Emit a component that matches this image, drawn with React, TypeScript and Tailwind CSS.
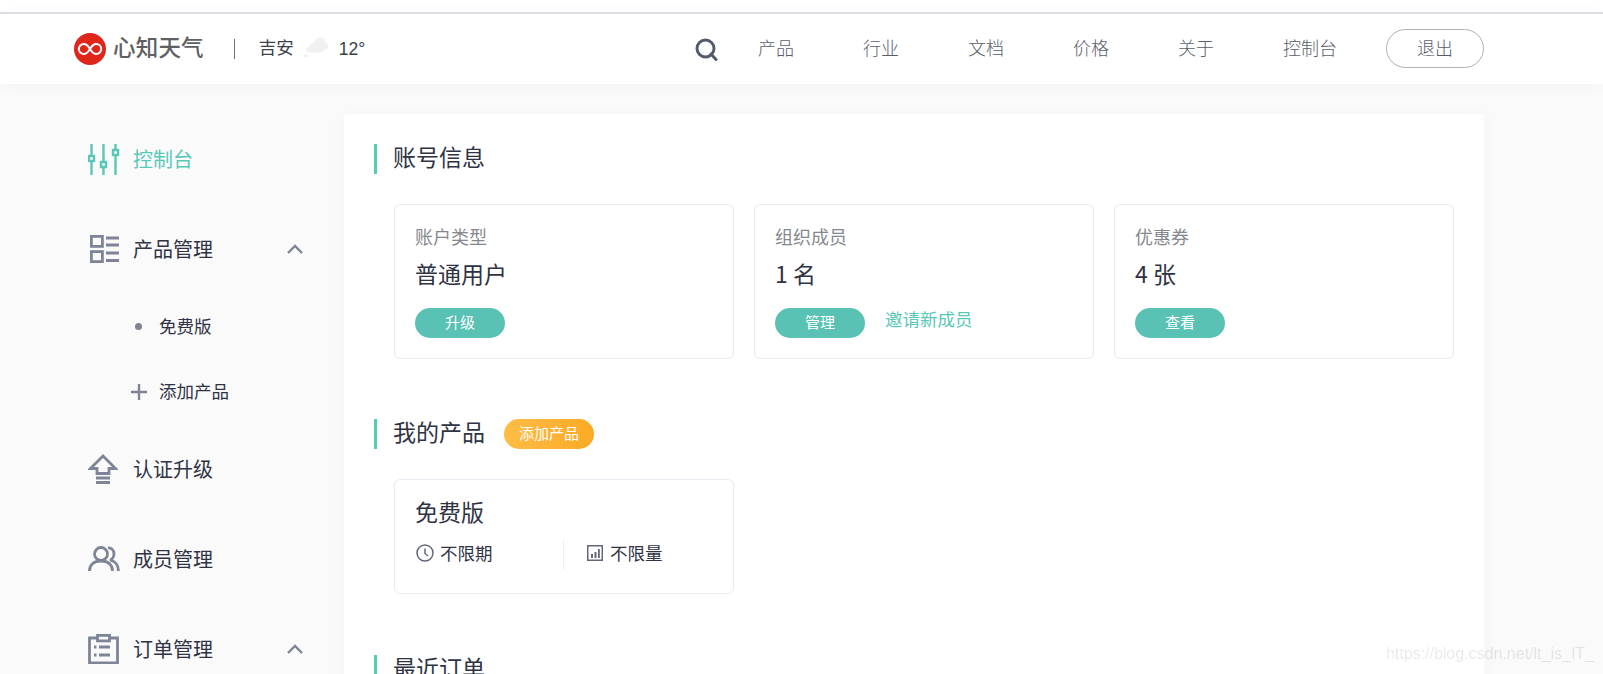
import React from "react";

const font = { fontFamily: '"Noto Sans CJK SC", "Liberation Sans", sans-serif' };

function Logo() {
  return (
    <svg width="32" height="32" viewBox="0 0 32 32" className="shrink-0">
      <circle cx="16" cy="16" r="16" fill="#e0251b" />
      <path d="M16 16c-1.800-3-3.600-5-6.200-5A5 5 0 0 0 4.800 16a5 5 0 0 0 5 5c2.600 0 4.400-2 6.200-5s3.600-5 6.200-5a5 5 0 0 1 5 5 5 5 0 0 1-5 5c-2.600 0-4.400-2-6.200-5z" fill="none" stroke="#fff" strokeWidth="2" />
    </svg>
  );
}

function Cloud() {
  return (
    <svg width="25" height="20" viewBox="0 0 25 20" className="shrink-0">
      <path d="M3 14c0-2.500 1.500-4 3.500-4.300C7.500 6.500 9.500 5 11.500 5 12.500 2 15 .5 17.500 .5c3 0 4.500 2.500 4.500 5 2 .5 3 2 3 4 0 2.500-2 3.500-4 3.500-1 2-3 2.500-5 2.500H7c-2.500 0-4-.5-4-1.500z" fill="#f1f1f1" />
      <path d="M0 20c0-2 1.500-3 3-3s3 1 3 3z" fill="#f2f2f2" />
    </svg>
  );
}

function Search() {
  return (
    <svg width="23" height="23" viewBox="0 0 23 23" fill="none" stroke="#555b6e" strokeWidth="3" className="shrink-0">
      <circle cx="10.500" cy="10.500" r="8.500" />
      <path d="M16 16l5 5.500" strokeLinecap="round" />
    </svg>
  );
}

function Sliders() {
  return (
    <svg width="32" height="31" viewBox="0 0 32 31" fill="none" stroke="#5ac8b8" strokeWidth="2.400" className="shrink-0">
      <path d="M3.500 0v12M3.500 17v14M15.500 0v18M15.500 23v8M27.500 0v6M27.500 11v20" />
      <rect x="1" y="12" width="5" height="5" />
      <rect x="13" y="18" width="5" height="5" />
      <rect x="25" y="6" width="5" height="5" />
    </svg>
  );
}

function ListIcon() {
  return (
    <svg width="29" height="28" viewBox="0 0 29 28" fill="none" stroke="#7f8496" strokeWidth="2.800" className="ml-[2px] shrink-0">
      <rect x="1.400" y="1.400" width="11" height="10" />
      <rect x="1.400" y="16.600" width="11" height="10" />
      <path d="M16 3h13M16 10h13M16 18h13M16 25.500h13" />
    </svg>
  );
}

function UpgradeIcon() {
  return (
    <svg width="30" height="30" viewBox="0 0 30 30" fill="none" stroke="#7f8496" strokeWidth="2.800" className="shrink-0">
      <path d="M15 2L2.500 14.500h6.500v5h12v-5h6.500z" strokeLinejoin="miter" />
      <path d="M8 24h14M8 28.500h14" />
    </svg>
  );
}

function UsersIcon() {
  return (
    <svg width="32" height="26" viewBox="0 0 32 26" fill="none" stroke="#7f8496" strokeWidth="2.800" className="shrink-0">
      <circle cx="13" cy="8" r="6.500" />
      <path d="M1.500 25c0-6 4-10 11.500-10s11.500 4 11.500 10" />
      <path d="M20 2c3-.5 6 2 6 6 0 3-2 5.500-4 6 5 1 8.500 5 8.500 11" />
    </svg>
  );
}

function OrderIcon() {
  return (
    <svg width="31" height="30" viewBox="0 0 31 30" fill="none" stroke="#7f8496" strokeWidth="2.800" className="shrink-0">
      <path d="M9 4H1.500v24.800h28V4H22" />
      <rect x="9.500" y="1.400" width="12" height="5.500" />
      <path d="M11 13h11M11 21h11" />
      <path d="M6 13h2.500M6 21h2.500" />
    </svg>
  );
}

function Chevron() {
  return (
    <svg width="16" height="10" viewBox="0 0 16 10" fill="none" stroke="#7f8496" strokeWidth="2.400" className="shrink-0">
      <path d="M1 9l7-7 7 7" />
    </svg>
  );
}

function ClockIcon() {
  return (
    <svg width="18" height="18" viewBox="0 0 18 18" fill="none" stroke="#62677a" strokeWidth="1.500" className="shrink-0">
      <circle cx="9" cy="9" r="8" />
      <path d="M9 4.500V9.500l3 2.500" />
    </svg>
  );
}

function BarsIcon() {
  return (
    <svg width="16" height="16" viewBox="0 0 16 16" className="shrink-0">
      <rect x=".75" y=".75" width="14.500" height="14.500" fill="none" stroke="#62677a" strokeWidth="1.500" />
      <path d="M4 9h2v4H4zM7.500 7h2v6h-2zM11 4h1.800v9H11z" fill="#62677a" />
    </svg>
  );
}

function PlusIcon() {
  return (
    <svg width="16" height="16" viewBox="0 0 16 16" stroke="#7f8496" strokeWidth="2.400" className="shrink-0">
      <path d="M0 8h16M8 0v16" />
    </svg>
  );
}

const navItems = ["产品", "行业", "文档", "价格", "关于", "控制台"];

function Header() {
  return (
    <header className="relative z-10 box-content flex h-[70px] items-center border-t-2 border-[#dcdce3] bg-white pl-[74px] pr-[119px] shadow-[0_2px_16px_rgba(0,0,0,0.03)]">
      <Logo />
      <span className="mb-1 ml-[7px] text-[22.500px] font-medium tracking-[0.2px] text-[#606064]">心知天气</span>
      <span className="ml-[30px] h-5 w-px bg-[#6e7280]" />
      <span className="mb-[3px] ml-[24px] text-[17.500px] text-[#3c3f4a]">吉安</span>
      <span className="mb-1 ml-[9px]"><Cloud /></span>
      <span className="ml-[11px] text-[17.500px] text-[#3c3f4a]" style={{ fontFamily: '"Liberation Sans", sans-serif' }}>12°</span>
      <div className="ml-auto flex items-center">
        <Search />
        <nav className="mb-1 ml-10 flex items-center gap-[69px] text-[18px] font-light text-[#5a5e6c]">
          {navItems.map((n) => (
            <span key={n}>{n}</span>
          ))}
        </nav>
        <button className="mb-[2px] ml-[49px] h-[39px] w-[98px] rounded-[20px] border border-[#b0b0b6] pb-[1px] text-[18px] font-light text-[#5a5e6c]">退出</button>
      </div>
    </header>
  );
}

function SideRow({ icon, label, active, chevron }: { icon: React.ReactNode; label: string; active?: boolean; chevron?: boolean }) {
  return (
    <div className="flex h-[90px] items-center pl-[88px] pr-[41px]">
      <span className="flex w-[45px] shrink-0 items-center">{icon}</span>
      <span className={active ? "text-[20px] text-[#5ac8b8]" : "text-[20px] text-[#2f3344]"}>{label}</span>
      {chevron && <span className="ml-auto"><Chevron /></span>}
    </div>
  );
}

function SubRow({ icon, label }: { icon: React.ReactNode; label: string }) {
  return (
    <div className="flex h-[65px] items-center pl-[131px] text-[17.500px] text-[#2f3344]">
      <span className="flex w-[28px] shrink-0 items-center">{icon}</span>
      {label}
    </div>
  );
}

function Sidebar() {
  return (
    <aside className="w-[344px] shrink-0">
      <SideRow icon={<Sliders />} label="控制台" active />
      <SideRow icon={<ListIcon />} label="产品管理" chevron />
      <SubRow icon={<span className="ml-1 h-[7px] w-[7px] rounded-full bg-[#7f8490]" />} label="免费版" />
      <SubRow icon={<PlusIcon />} label="添加产品" />
      <SideRow icon={<UpgradeIcon />} label="认证升级" />
      <SideRow icon={<UsersIcon />} label="成员管理" />
      <SideRow icon={<OrderIcon />} label="订单管理" chevron />
    </aside>
  );
}

function SectionTitle({ title, children }: { title: string; children?: React.ReactNode }) {
  return (
    <div className="flex h-[30px] items-center border-l-[3px] border-[#55cdb4] pl-[16px]">
      <h2 className="pb-[6px] text-[23px] font-normal leading-[30px] text-[#2f3344]">{title}</h2>
      {children}
    </div>
  );
}

function PillButton({ label }: { label: string }) {
  return (
    <button className="h-[30px] w-[90px] rounded-[15px] bg-[#59c2b5] pb-[2px] text-[15px] text-white">{label}</button>
  );
}

function InfoCard({ label, value, btn, link }: { label: string; value: string; btn: string; link?: string }) {
  return (
    <div className="h-[155px] w-[340px] rounded-[6px] border border-[#e8ebf2] bg-white pl-5 pt-[19px]">
      <div className="text-[18px] leading-6 text-[#85898f]">{label}</div>
      <div className="mt-[10px] text-[23px] leading-[30px] text-[#2f3344]">{value}</div>
      <div className="mt-[20px] flex items-start">
        <PillButton label={btn} />
        {link && <span className="ml-5 text-[17.500px] leading-[22px] text-[#5ac8b8]">{link}</span>}
      </div>
    </div>
  );
}

function Content() {
  return (
    <main className="h-[700px] w-[1140px] shrink-0 rounded-[4px] bg-white pl-[30px] pt-[30px] shadow-[0_2px_20px_rgba(0,0,0,0.03)]">
      <SectionTitle title="账号信息" />
      <div className="ml-5 mt-[30px] flex gap-5">
        <InfoCard label="账户类型" value="普通用户" btn="升级" />
        <InfoCard label="组织成员" value="1 名" btn="管理" link="邀请新成员" />
        <InfoCard label="优惠券" value="4 张" btn="查看" />
      </div>
      <div className="mt-[60px]">
        <SectionTitle title="我的产品">
          <button className="ml-[19px] h-[30px] w-[90px] rounded-[15px] bg-gradient-to-r from-[#fdbd45] to-[#fbaa22] pb-[2px] text-[15px] text-white">添加产品</button>
        </SectionTitle>
      </div>
      <div className="ml-5 mt-[30px] h-[115px] w-[340px] rounded-[6px] border border-[#e8ebf2] bg-white pl-5 pt-[16px]">
        <div className="text-[23px] leading-[30px] text-[#2f3344]">免费版</div>
        <div className="mt-[14px] flex h-[30px] text-[17.500px] text-[#2f3344]">
          <div className="flex h-[30px] w-[149px] items-center border-r border-[#eceef3] pb-[4px] pl-px">
            <ClockIcon />
            <span className="ml-[6px]">不限期</span>
          </div>
          <div className="flex h-[30px] items-center pb-[4px] pl-[23px]">
            <BarsIcon />
            <span className="ml-[7px]">不限量</span>
          </div>
        </div>
      </div>
      <div className="mt-[61px]">
        <SectionTitle title="最近订单" />
      </div>
    </main>
  );
}

export default function App() {
  return (
    <div className="relative h-[674px] overflow-hidden bg-[#fafafa]" style={font}>
      <div className="h-3 bg-white" />
      <Header />
      <div className="flex pt-[30px]">
        <Sidebar />
        <Content />
      </div>
      <span
        className="absolute bottom-[8px] right-[9px] text-[16px] text-black/10"
        style={{ fontFamily: '"Liberation Sans", sans-serif' }}
      >
        https://blog.csdn.net/lt_is_IT_
      </span>
    </div>
  );
}
